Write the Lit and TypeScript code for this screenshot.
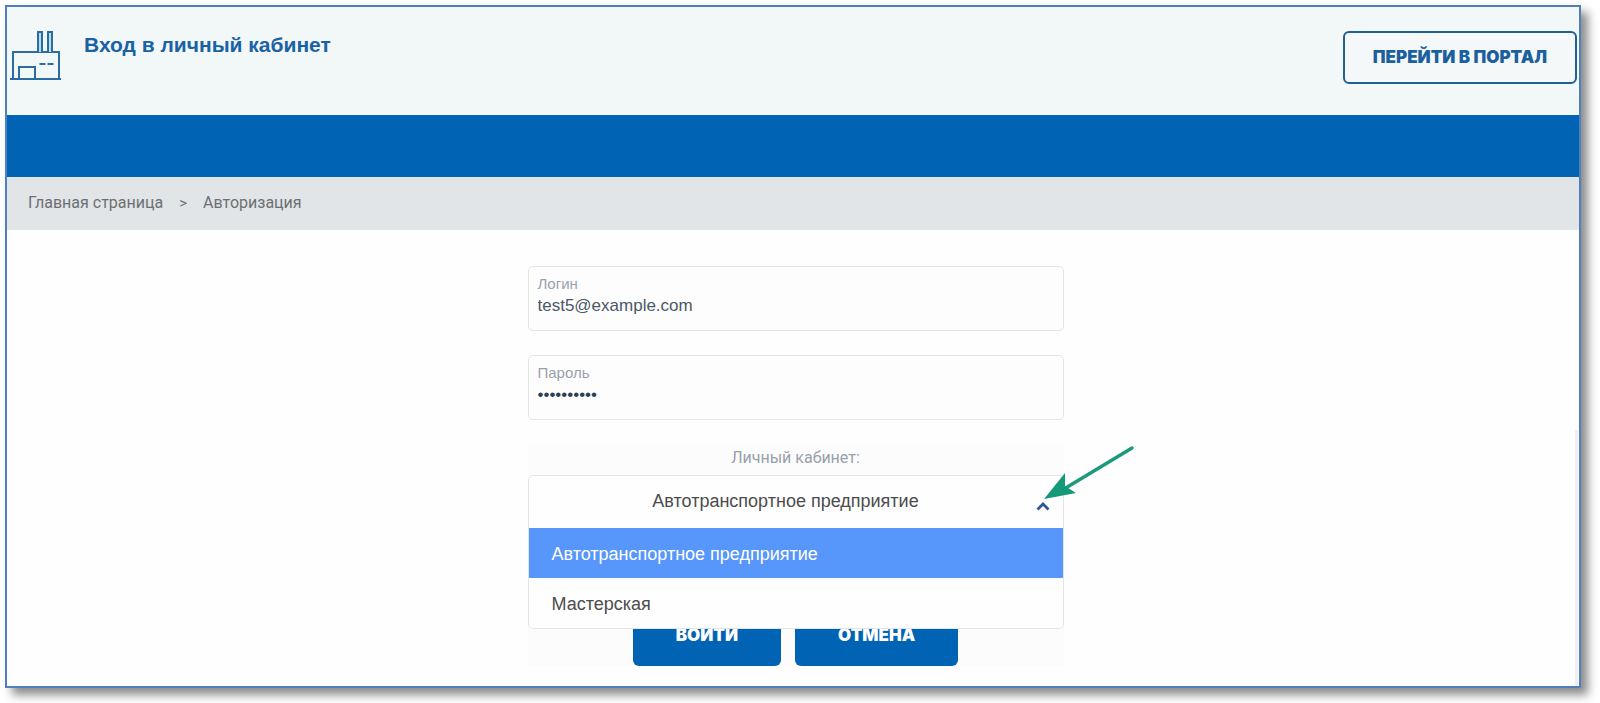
import { LitElement, html, css } from "lit";
import { customElement, state } from "lit/decorators.js";
import { classMap } from "lit/directives/class-map.js";

const CABINETS = ["Автотранспортное предприятие", "Мастерская"];

@customElement("cabinet-select")
class CabinetSelect extends LitElement {
  @state() open = true;
  @state() selected = 0;

  static styles = css`
    :host {
      display: block;
      font-family: "Liberation Sans", Arial, sans-serif;
    }
    .label {
      display: block;
      padding: 4px 0 7px;
      text-align: center;
      font: 16px/20px Roboto, sans-serif;
      color: #98a0ac;
    }
    .box {
      position: relative;
    }
    .select {
      display: block;
      box-sizing: border-box;
      width: 100%;
      height: 54px;
      margin: 0;
      padding: 0 40px 2px 20px;
      appearance: none;
      border: 1px solid #e2e4e6;
      border-radius: 5px 5px 0 0;
      outline: none;
      background: #fefefe;
      color: #4c4c4c;
      font: 18px/24px "Liberation Sans", Arial, sans-serif;
      text-align: center;
      text-align-last: center;
    }
    .chevron {
      position: absolute;
      right: 14px;
      top: 26px;
      pointer-events: none;
    }
    .menu {
      position: absolute;
      z-index: 1;
      top: 53px;
      left: 0;
      right: 0;
      margin: 0;
      padding: 0;
      list-style: none;
      border: 1px solid #e2e4e6;
      border-top: 0;
      border-radius: 0 0 5px 5px;
      background: #fefefe;
      overflow: hidden;
    }
    .option {
      padding: 14px 23px 12px;
      font-size: 18px;
      line-height: 24px;
      color: #4c4c4c;
    }
    .option.active {
      background: #5796fb;
      color: #fff;
    }
  `;

  private toggle(e: Event) {
    e.preventDefault();
    this.open = !this.open;
  }

  private pick(i: number) {
    this.selected = i;
    this.open = false;
  }

  render() {
    return html`
      <label class="label" for="cabinet">Личный кабинет:</label>
      <div class="box">
        <select class="select" id="cabinet" @mousedown=${this.toggle}>
          ${CABINETS.map((c, i) => html`<option ?selected=${i === this.selected}>${c}</option>`)}
        </select>
        <svg class="chevron" width="14" height="11" viewBox="0 0 14 11" aria-hidden="true">
          <path d="M1.5 8.5 7 3l5.5 5.5" fill="none" stroke="#2b579a" stroke-width="2.8" />
        </svg>
        ${this.open
          ? html`<ul class="menu" role="listbox" aria-label="Личный кабинет">
              ${CABINETS.map(
                (c, i) => html`<li
                  class=${classMap({ option: true, active: i === this.selected })}
                  role="option"
                  aria-selected=${i === this.selected}
                  @click=${() => this.pick(i)}
                >${c}</li>`
              )}
            </ul>`
          : null}
      </div>
    `;
  }
}

@customElement("app-root")
class AppRoot extends LitElement {
  static styles = css`
    :host {
      display: block;
      padding: 5px 19px 15px 5px;
      background: #fff;
      font-family: Roboto, sans-serif;
    }
    .frame {
      border: 2px solid #4f7fbd;
      background: #fff;
      box-shadow: 7px 7px 9px rgba(0, 0, 0, 0.45);
    }
    .header {
      display: flex;
      justify-content: space-between;
      align-items: flex-start;
      padding: 24px 2px 31px 3px;
      background: #f2f7f8;
    }
    .brand {
      display: flex;
      align-items: flex-start;
      gap: 22px;
    }
    .title {
      margin: 0;
      font: bold 21px/28px "Liberation Sans", Arial, sans-serif;
      color: #1b62a5;
    }
    .portal {
      box-sizing: border-box;
      height: 53px;
      margin: 0;
      padding: 0 28px 2px;
      border: 2px solid #1f6096;
      border-radius: 6px;
      background: #f4f8f9;
      color: #1b5f9f;
      font: 900 17px/24px Inter, sans-serif;
    }
    .nav {
      height: 62px;
      background: #0063b3;
    }
    .crumbs {
      display: flex;
      align-items: center;
      gap: 16px;
      padding: 14px 21px 15px;
      background: #e1e5e7;
      color: #6d7073;
      font-size: 16px;
      line-height: 24px;
    }
    .crumbs a {
      color: inherit;
      text-decoration: none;
    }
    .sep {
      font-size: 15px;
    }
    .main {
      position: relative;
      padding: 36px 0 20px 5px;
      background: #fefefe;
    }
    .main::after {
      content: "";
      position: absolute;
      right: 1px;
      top: 200px;
      bottom: 0;
      width: 3px;
      background: #eeeff5;
    }
    .form {
      display: flex;
      flex-direction: column;
      gap: 24px;
      width: 536px;
      max-width: 100%;
      margin: 0 auto;
    }
    .field {
      display: flex;
      flex-direction: column;
      box-sizing: border-box;
      height: 65px;
      padding: 7px 9px;
      border: 1px solid #e2e4e6;
      border-radius: 5px;
      background: #fdfdfe;
      font-family: "Liberation Sans", Arial, sans-serif;
    }
    .field label {
      font-size: 15px;
      line-height: 20px;
      color: #9aa1ac;
    }
    .field input {
      height: 24px;
      margin: 0;
      padding: 0;
      border: 0;
      outline: none;
      background: none;
      color: #4b5865;
      font: 17px/24px "Liberation Sans", Arial, sans-serif;
    }
    .field .password {
      color: #2f3f55;
    }
    .cabinet {
      background: #fcfcfd;
    }
    .actions {
      display: flex;
      justify-content: center;
      gap: 14px;
      margin-top: 84px;
    }
    .action {
      height: 53px;
      margin: 0;
      padding: 0 43px 10px;
      border: 0;
      border-radius: 6px;
      background: #0063b3;
      color: #fff;
      font: 900 17px/24px Inter, sans-serif;
    }
    .pointer {
      position: absolute;
      z-index: 2;
      left: calc(50% + 251px);
      top: 215px;
      pointer-events: none;
    }
  `;

  render() {
    return html`
      <div class="frame">
        <header class="header">
          <div class="brand">
            <svg width="52" height="50" viewBox="0 0 52 50" fill="none" stroke="#2b6da3" stroke-width="2" aria-hidden="true">
              <path d="M0 48h51M3 48V21h46v27M9 48V36h16v12" />
              <path d="M28 21V1h4v20M38 21V1h4v20" fill="#b9def0" />
              <path d="M29.500 33h6M37.500 33h6" />
            </svg>
            <h1 class="title">Вход в личный кабинет</h1>
          </div>
          <button class="portal" type="button">ПЕРЕЙТИ В ПОРТАЛ</button>
        </header>
        <div class="nav"></div>
        <nav class="crumbs">
          <a href="#">Главная страница</a>
          <span class="sep">&gt;</span>
          <span>Авторизация</span>
        </nav>
        <main class="main">
          <form class="form" @submit=${(e: Event) => e.preventDefault()}>
            <div class="field">
              <label for="login">Логин</label>
              <input id="login" type="text" value="test5@example.com" />
            </div>
            <div class="field">
              <label for="password">Пароль</label>
              <input class="password" id="password" type="password" value="1234567890" />
            </div>
            <div class="cabinet">
              <cabinet-select></cabinet-select>
              <div class="actions">
                <button class="action" type="submit">ВОЙТИ</button>
                <button class="action" type="button">ОТМЕНА</button>
              </div>
            </div>
          </form>
          <svg class="pointer" width="94" height="56" viewBox="0 0 94 56" aria-hidden="true">
            <path d="M88 3 20 44" stroke="#1d9a7c" stroke-width="3.5" stroke-linecap="round" />
            <path d="M0 54 21 28 21 41 32 48z" fill="#149a78" />
          </svg>
        </main>
      </div>
    `;
  }
}
